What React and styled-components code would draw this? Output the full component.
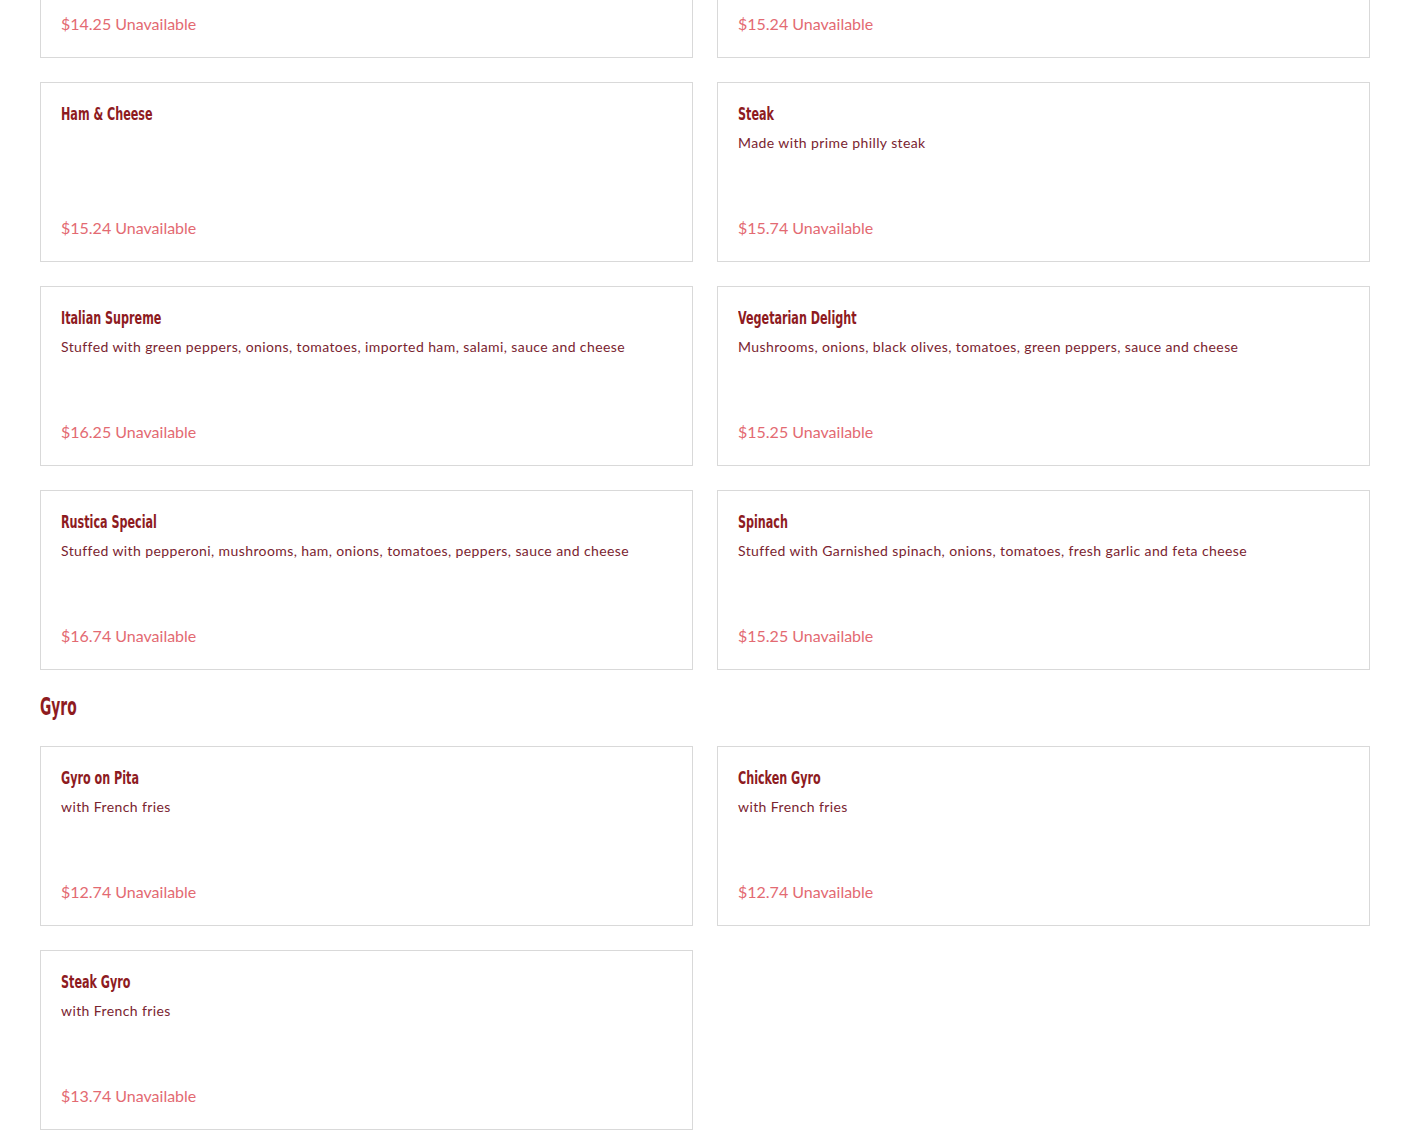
import React from 'react'
import styled, { createGlobalStyle } from 'styled-components'

const GlobalStyle = createGlobalStyle`
  html, body {
    margin: 0;
    padding: 0;
    background: #fff;
  }
  body {
    font-family: Lato, "Open Sans", sans-serif;
    overflow: hidden;
  }
`;

// first row is scrolled past, only its prices show
const sections = [
  {
    name: null,
    items: [
      { id: 'a', title: '', desc: '', price: '$14.25' },
      { id: 'b', title: '', desc: '', price: '$15.24' },
      { id: 'c', title: 'Ham & Cheese', desc: '', price: '$15.24' },
      { id: 'd', title: 'Steak', desc: 'Made with prime philly steak', price: '$15.74' },
      { id: 'e', title: 'Italian Supreme', desc: 'Stuffed with green peppers, onions, tomatoes, imported ham, salami, sauce and cheese', price: '$16.25' },
      { id: 'f', title: 'Vegetarian Delight', desc: 'Mushrooms, onions, black olives, tomatoes, green peppers, sauce and cheese', price: '$15.25' },
      { id: 'g', title: 'Rustica Special', desc: 'Stuffed with pepperoni, mushrooms, ham, onions, tomatoes, peppers, sauce and cheese', price: '$16.74' },
      { id: 'h', title: 'Spinach', desc: 'Stuffed with Garnished spinach, onions, tomatoes, fresh garlic and feta cheese', price: '$15.25' },
    ],
  },
  {
    name: 'Gyro',
    items: [
      { id: 'i', title: 'Gyro on Pita', desc: 'with French fries', price: '$12.74' },
      { id: 'j', title: 'Chicken Gyro', desc: 'with French fries', price: '$12.74' },
      { id: 'k', title: 'Steak Gyro', desc: 'with French fries', price: '$13.74' },
    ],
  },
];

function App() {
  return (
    <Page>
      <GlobalStyle />
      {sections.map((s, i) => (
        <Section key={i}>
          {s.name && <SectionTitle>{s.name}</SectionTitle>}
          <Grid>
            {s.items.map((it) => (
              <Card key={it.id}>
                {it.title && <ItemTitle>{it.title}</ItemTitle>}
                {it.desc && <ItemDesc>{it.desc}</ItemDesc>}
                <Price>{it.price} Unavailable</Price>
              </Card>
            ))}
          </Grid>
        </Section>
      ))}
    </Page>
  );
}
export default App;

const Page = styled.div`
  padding: 0 40px 12px;
  margin-top: -122px;
`;

const Section = styled.section`
  display: flex;
  flex-direction: column;
`;

const SectionTitle = styled.h2`
  align-self: flex-start;
  margin: 22px 0 24px;
  font-family: "DejaVu Sans Condensed", "DejaVu Sans", sans-serif;
  font-weight: 700;
  font-size: 24px;
  line-height: 30px;
  color: #8e1b1f;
  transform: scaleX(0.64);
  transform-origin: left center;
`;

const Grid = styled.div`
  display: grid;
  grid-template-columns: 1fr 1fr;
  gap: 24px;
`;

const Card = styled.div`
  box-sizing: border-box;
  min-height: 180px;
  border: 1px solid #d9d9d9;
  padding: 20px;
  display: flex;
  flex-direction: column;
`;

const ItemTitle = styled.div`
  align-self: flex-start;
  white-space: nowrap;
  font-family: "DejaVu Sans Condensed", "DejaVu Sans", sans-serif;
  font-weight: 700;
  font-size: 18px;
  line-height: 22px;
  color: #8e1b1f;
  transform: scaleX(0.69);
  transform-origin: left center;
`;

const ItemDesc = styled.div`
  margin-top: 8px;
  font-family: Lato, sans-serif;
  font-size: 14px;
  line-height: 20px;
  letter-spacing: 0.4px;
  color: #7a2430;
`;

const Price = styled.div`
  margin-top: auto;
  font-family: Lato, sans-serif;
  font-size: 16px;
  line-height: 26px;
  color: #e36a72;
`;
